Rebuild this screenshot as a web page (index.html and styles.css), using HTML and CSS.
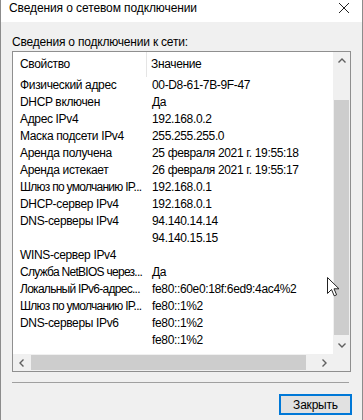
FILE: index.html
```html
<!DOCTYPE html>
<html lang="ru">
<head>
  <meta charset="UTF-8" />
  <title>Сведения о сетевом подключении</title>
  <link rel="stylesheet" href="styles.css">
</head>
<body>
  <div class="window">
    <div class="titlebar">
      <span class="title">Сведения о сетевом подключении</span>
      <svg class="close" width="12" height="12" viewBox="0 0 12 12">
        <path d="M1 1 L11 11 M11 1 L1 11" stroke="#222" stroke-width="1" fill="none" />
      </svg>
    </div>

    <div class="content">
      <div class="caption">Сведения о подключении к сети:</div>

      <div class="listbox">
        <div class="list">
          <div class="row head">
            <div class="cell prop">Свойство</div>
            <div class="cell val">Значение</div>
          </div>
          <div class="row"><div class="cell prop">Физический адрес</div><div class="cell val">00-D8-61-7B-9F-47</div></div>
          <div class="row"><div class="cell prop">DHCP включен</div><div class="cell val">Да</div></div>
          <div class="row"><div class="cell prop">Адрес IPv4</div><div class="cell val">192.168.0.2</div></div>
          <div class="row"><div class="cell prop">Маска подсети IPv4</div><div class="cell val">255.255.255.0</div></div>
          <div class="row"><div class="cell prop">Аренда получена</div><div class="cell val">25 февраля 2021 г. 19:55:18</div></div>
          <div class="row"><div class="cell prop">Аренда истекает</div><div class="cell val">26 февраля 2021 г. 19:55:17</div></div>
          <div class="row"><div class="cell prop trunc">Шлюз по умолчанию IP...</div><div class="cell val">192.168.0.1</div></div>
          <div class="row"><div class="cell prop">DHCP-сервер IPv4</div><div class="cell val">192.168.0.1</div></div>
          <div class="row"><div class="cell prop">DNS-серверы IPv4</div><div class="cell val">94.140.14.14</div></div>
          <div class="row"><div class="cell prop"></div><div class="cell val">94.140.15.15</div></div>
          <div class="row"><div class="cell prop">WINS-сервер IPv4</div><div class="cell val"></div></div>
          <div class="row"><div class="cell prop trunc">Служба NetBIOS через...</div><div class="cell val">Да</div></div>
          <div class="row"><div class="cell prop trunc">Локальный IPv6-адрес...</div><div class="cell val">fe80::60e0:18f:6ed9:4ac4%2</div></div>
          <div class="row"><div class="cell prop trunc">Шлюз по умолчанию IP...</div><div class="cell val">fe80::1%2</div></div>
          <div class="row"><div class="cell prop">DNS-серверы IPv6</div><div class="cell val">fe80::1%2</div></div>
          <div class="row"><div class="cell prop"></div><div class="cell val">fe80::1%2</div></div>
        </div>

        <div class="vscroll">
          <div class="arrow">
            <svg width="8" height="5" viewBox="0 0 8 5"><path d="M0.5 4.5 L4 1 L7.5 4.5" stroke="#606060" stroke-width="1.4" fill="none" /></svg>
          </div>
          <div class="track-v"><div class="thumb-v"></div></div>
          <div class="arrow">
            <svg width="8" height="5" viewBox="0 0 8 5"><path d="M0.5 0.5 L4 4 L7.5 0.5" stroke="#606060" stroke-width="1.4" fill="none" /></svg>
          </div>
        </div>

        <div class="hscroll">
          <div class="arrow">
            <svg width="5" height="8" viewBox="0 0 5 8"><path d="M4.5 0.5 L1 4 L4.5 7.5" stroke="#606060" stroke-width="1.4" fill="none" /></svg>
          </div>
          <div class="track-h"><div class="thumb-h"></div></div>
          <div class="arrow">
            <svg width="5" height="8" viewBox="0 0 5 8"><path d="M0.5 0.5 L4 4 L0.5 7.5" stroke="#606060" stroke-width="1.4" fill="none" /></svg>
          </div>
        </div>

        <div class="corner"></div>
      </div>

      <div class="separator"></div>

      <div class="buttons">
        <button class="btn">Закрыть</button>
      </div>
    </div>

    <svg class="cursor" width="13" height="20" viewBox="0 0 13 20">
      <path d="M0.5 0.5 L0.5 16.5 L4.5 12.5 L7.2 18.8 L9.6 17.8 L7 11.8 L12 11.8 Z" fill="#fff" stroke="#222" stroke-width="1" stroke-linejoin="miter" />
    </svg>
  </div>
</body>
</html>
```

FILE: styles.css
```css
* {
  margin: 0;
  padding: 0;
  box-sizing: border-box;
}
body {
  width: 363px;
  height: 420px;
  overflow: hidden;
  font-family: "Liberation Sans", Arial, sans-serif;
  font-size: 12px;
  letter-spacing: -0.35px;
  color: #000;
  background: #f0f0f0;
}
.window {
  position: relative;
  width: 363px;
  height: 420px;
  background: #f0f0f0;
  border-left: 1px solid #8c8c8c;
  border-right: 1px solid #8c8c8c;
}
.titlebar {
  height: 22px;
  background: #fff;
  display: flex;
  align-items: center;
  justify-content: space-between;
  padding: 0 10px 6px 8px;
}
.title {
  font-size: 12px;
  letter-spacing: -0.1px;
  color: #000;
}
.close {
  display: block;
  margin-right: 2px;
}
.content {
  padding: 12px 0 0 11px;
}
.caption {
  line-height: 16px;
  height: 17px;
  letter-spacing: -0.2px;
}

/* list view */
.listbox {
  width: 339px;
  height: 321px;
  border: 1px solid #8f8f8f;
  background: #fff;
  display: grid;
  grid-template-columns: 320px 17px;
  grid-template-rows: 302px 17px;
}
.list {
  overflow: hidden;
}
.row {
  display: flex;
  height: 17px;
  line-height: 17px;
  white-space: nowrap;
}
.row.head {
  height: 25px;
  line-height: 24px;
}
.cell {
  overflow: hidden;
  white-space: nowrap;
}
.prop {
  width: 134px;
  flex: none;
  padding-left: 7px;
  padding-right: 1px;
}
.prop.trunc {
  padding-right: 0;
  letter-spacing: -0.72px;
}
.val {
  padding-left: 5px;
  flex: none;
  width: 186px;
}
.head .prop {
  border-right: 1px solid #e5e5e5;
}
.head .val {
  padding-left: 4px;
}

/* scrollbars */
.vscroll {
  display: flex;
  flex-direction: column;
  background: #f0f0f0;
}
.vscroll .arrow {
  height: 17px;
  flex: none;
}
.arrow {
  display: flex;
  align-items: center;
  justify-content: center;
  background: #f0f0f0;
}
.arrow svg {
  display: block;
}
.track-v {
  flex: 1;
  padding-top: 31px;
  padding-bottom: 2px;
  padding-left: 1px;
  padding-right: 1px;
}
.thumb-v {
  height: 100%;
  background: #cdcdcd;
}
.hscroll {
  display: flex;
  background: #f0f0f0;
}
.hscroll .arrow {
  width: 17px;
  flex: none;
}
.track-h {
  flex: 1;
  padding: 1px 10px 1px 1px;
}
.thumb-h {
  height: 100%;
  background: #cdcdcd;
}
.corner {
  background: #f0f0f0;
}

.separator {
  width: 337px;
  height: 1px;
  background: #a0a0a0;
  margin-top: 10px;
}
.buttons {
  display: flex;
  justify-content: flex-end;
  padding: 11px 10px 0 0;
}
.btn {
  width: 73px;
  height: 21px;
  font-family: "Liberation Sans", Arial, sans-serif;
  font-size: 12px;
  letter-spacing: -0.2px;
  color: #000;
  background: #e1e1e1;
  border: 1px solid #0078d7;
  box-shadow: inset 0 0 0 1px #0078d7;
}

.cursor {
  position: absolute;
  left: 326px;
  top: 277px;
}
```
